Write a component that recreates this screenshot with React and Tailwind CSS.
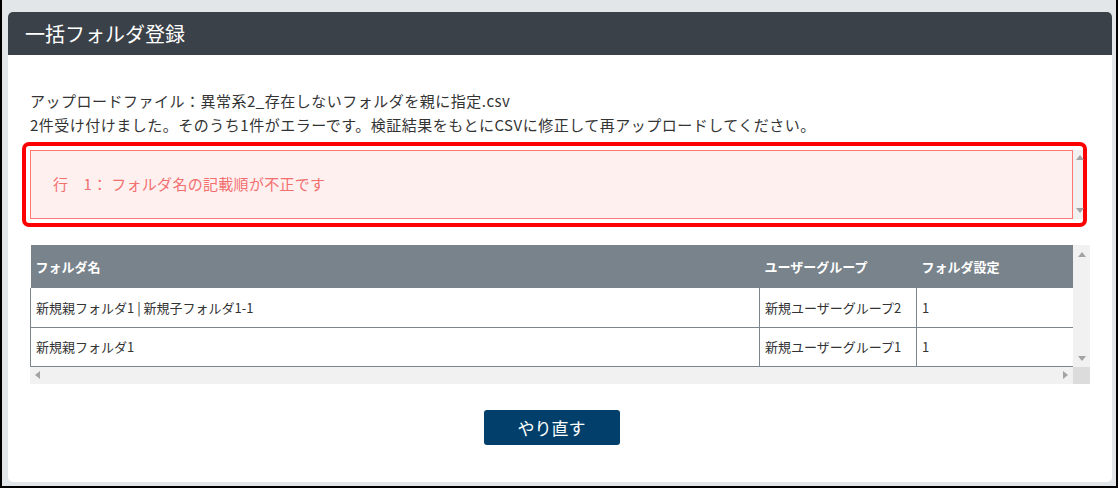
const font = { fontFamily: '"Noto Sans CJK JP", "Noto Sans", sans-serif' }

function Arrow({ dir }) {
  const pts = {
    up: '0,5 4,0 8,5',
    down: '0,0 8,0 4,5',
    left: '5,0 5,8 0,4',
    right: '0,0 0,8 5,4',
  }[dir]
  const vertical = dir === 'up' || dir === 'down'
  return (
    <svg width={vertical ? 8 : 5} height={vertical ? 5 : 8} viewBox={vertical ? '0 0 8 5' : '0 0 5 8'}>
      <polygon points={pts} fill="#a3a3a3" />
    </svg>
  )
}

const rows = [
  { name: '新規親フォルダ1 | 新規子フォルダ1-1', group: '新規ユーザーグループ2', setting: '1' },
  { name: '新規親フォルダ1', group: '新規ユーザーグループ1', setting: '1' },
]

export default function App() {
  return (
    <div
      className="w-[1118px] h-[488px] bg-[#e3e6e9] border-l-2 border-r-2 border-b-2 border-black pt-[12px] pl-[6px] pr-[4px] pb-[4px] overflow-hidden"
      style={font}
    >
      <div className="h-full bg-white rounded-[5px] overflow-hidden flex flex-col">
        {/* Header */}
        <div className="h-[43px] bg-[#3a4148] flex items-center pl-[17px] shrink-0">
          <h1 className="text-white text-[20px] font-normal leading-none">一括フォルダ登録</h1>
        </div>

        <div className="px-[22px] pt-[34px]">
          <p className="text-[15px] leading-6 text-[#333] tracking-[0.5px]">アップロードファイル：異常系2_存在しないフォルダを親に指定.csv</p>
          <p className="text-[15px] leading-6 text-[#333] tracking-[0.5px]">2件受け付けました。そのうち1件がエラーです。検証結果をもとにCSVに修正して再アップロードしてください。</p>

          {/* Error box */}
          <div className="mt-[5px] ml-[-8px] mr-[3px] border-4 border-[#ff0000] rounded-[7px] pt-1 pb-1 pl-1 flex">
            <div className="flex-1 h-[69px] bg-[#fff0f0] border border-[#ff7474] flex items-center pl-[22px]">
              <span className="text-[15px] text-[#f26f6f] tracking-[0.3px]">行　1： フォルダ名の記載順が不正です</span>
            </div>
            <div className="w-[10px] bg-[#f1f1f1] flex flex-col justify-between items-end pt-[5px] pb-[6px]">
              <div className="-mr-[1px]"><Arrow dir="up" /></div>
              <div className="-mr-[1px]"><Arrow dir="down" /></div>
            </div>
          </div>

          {/* Table */}
          <div className="mt-[18px] flex">
            <div className="w-[1043px] flex flex-col">
              <table className="w-full border-collapse text-[13px] table-fixed">
                <colgroup>
                  <col className="w-[729px]" />
                  <col className="w-[157px]" />
                  <col className="w-[157px]" />
                </colgroup>
                <thead>
                  <tr className="h-[43px] bg-[#78838b] text-white">
                    <th className="text-left font-bold pl-[5px]">フォルダ名</th>
                    <th className="text-left font-bold pl-[5px]">ユーザーグループ</th>
                    <th className="text-left font-bold pl-[5px]">フォルダ設定</th>
                  </tr>
                </thead>
                <tbody className="text-[#333]">
                  {rows.map((r, i) => (
                    <tr key={i} className="h-[39px]">
                      <td className="pl-[5px] border border-t-0 border-[#7a868e] whitespace-nowrap">{r.name}</td>
                      <td className="pl-[5px] border border-t-0 border-[#7a868e] whitespace-nowrap">{r.group}</td>
                      <td className="pl-[5px] border border-t-0 border-[#7a868e]">{r.setting}</td>
                    </tr>
                  ))}
                </tbody>
              </table>
              <div className="h-[17px] bg-[#f1f1f1] flex items-center justify-between px-[5px]">
                <Arrow dir="left" />
                <Arrow dir="right" />
              </div>
            </div>
            <div className="w-[17px] flex flex-col">
              <div className="flex-1 bg-[#f1f1f1] flex flex-col items-center justify-between pt-[7px] pb-[6px]">
                <Arrow dir="up" />
                <Arrow dir="down" />
              </div>
              <div className="h-[17px] bg-[#dcdcdc]" />
            </div>
          </div>

          {/* Button */}
          <div className="w-[1043px] flex justify-center mt-[26px]">
            <button className="w-[136px] h-[35px] bg-[#023f6b] text-white text-[17px] rounded-[3px] leading-none">
              やり直す
            </button>
          </div>
        </div>
      </div>
    </div>
  )
}
